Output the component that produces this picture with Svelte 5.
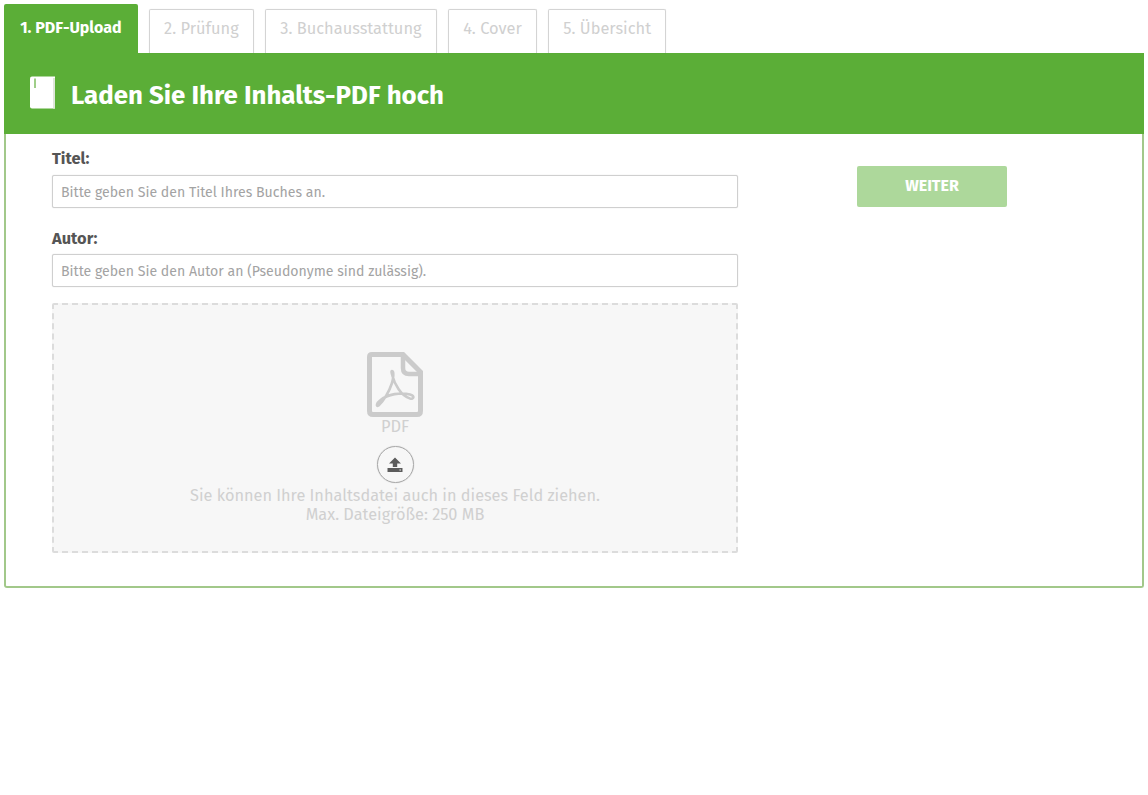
<script>
  const steps = ['2. Prüfung', '3. Buchausstattung', '4. Cover', '5. Übersicht'];
</script>

<div class="page">
  <nav class="tabs">
    <div class="tab active">1. PDF-Upload</div>
    {#each steps as s}
      <div class="tab">{s}</div>
    {/each}
  </nav>
  <section class="panel">
    <header class="head">
      <svg class="book" width="25" height="33" viewBox="0 0 25 33">
        <path d="M0 2.5 Q0 .4 2 .4 H25 V32.6 H2 Q0 32.6 0 30.5 Z" fill="#fff"/>
        <path d="M23 2 H25 V32.6 H23 Z" fill="#dfe6da"/>
        <path d="M4 2.5 H6 V12 H4 Z" fill="#9fce88"/>
      </svg>
      <h1>Laden Sie Ihre Inhalts-PDF hoch</h1>
    </header>
    <div class="body">
      <div class="form">
        <label class="lab first" for="t">Titel:</label>
        <input id="t" placeholder="Bitte geben Sie den Titel Ihres Buches an." />
        <label class="lab second" for="a">Autor:</label>
        <input id="a" placeholder="Bitte geben Sie den Autor an (Pseudonyme sind zulässig)." />
        <div class="drop">
          <svg class="pdf" width="56" height="65" viewBox="0 0 56 65" fill="none">
            <path d="M5 2.5 H36 L53.5 20 V59 Q53.5 62.5 50 62.5 H6 Q2.5 62.5 2.5 59 V5 Q2.5 2.5 5 2.5 Z" stroke="#cbcbcb" stroke-width="5"/>
            <path d="M36 3 V16 Q36 22 42 22 H53" stroke="#cbcbcb" stroke-width="4.5"/>
            <path d="M25 19 C27 19 26.5 26 25 31 C22 40 17 48 11.5 53.5 C9 55 9.5 51 13 48.5 C21 42 34 40 43 42.5 C48 44 47 47.5 43 46.5 C34 44 27.5 32 25.5 24 C25 22 24 19 25 19 Z" stroke="#cbcbcb" stroke-width="2.6" stroke-linejoin="round"/>
          </svg>
          <div class="pdflabel">PDF</div>
          <div class="circle">
            <svg width="18" height="16" viewBox="0 0 18 16">
              <path d="M9 0.5 L15 6.5 H11.2 V10 H6.8 V6.5 H3 Z" fill="#5c5c5c"/>
              <path d="M1.5 11 H16.5 V15 H1.5 Z" fill="#5c5c5c"/>
              <path d="M13.4 12.6 H15 V13.6 H13.4 Z" fill="#e8e8e8"/>
            </svg>
          </div>
          <div class="hint">Sie können Ihre Inhaltsdatei auch in dieses Feld ziehen.</div>
          <div class="hint">Max. Dateigröße: 250 MB</div>
        </div>
      </div>
      <div class="side">
        <button class="next">WEITER</button>
      </div>
    </div>
  </section>
</div>

<style>
  :global(body) { margin: 0; background: #fff; }
  .page {
    padding: 4px 3px 0 4px;
    font-family: "Fira Sans", "Noto Sans", "Open Sans", sans-serif;
    color: #555;
  }
  .tabs { display: flex; align-items: flex-end; gap: 11px; height: 49px; }
  .tab {
    box-sizing: border-box;
    height: 44px;
    padding: 0 14.3px;
    border: 1px solid #d4d4d4;
    border-bottom: 0;
    border-radius: 2px 2px 0 0;
    box-shadow: 0 0 1px rgba(0, 0, 0, 0.12);
    color: #d0d0d0;
    font-size: 16.4px;
    line-height: 38px;
    white-space: nowrap;
  }
  .tab.active {
    height: 49px;
    padding: 0 16.2px;
    border: 0;
    box-shadow: none;
    background: #5bae37;
    color: #fff;
    font-weight: 700;
    font-size: 16px;
    line-height: 48px;
  }
  .panel {
    box-sizing: border-box;
    width: 1140px;
    height: 535px;
    border: 2px solid #a2c88a;
    border-top: 0;
    border-radius: 0 0 3px 3px;
  }
  .head {
    display: flex;
    align-items: center;
    gap: 16px;
    height: 81px;
    margin: 0 -2px;
    padding-left: 26px;
    background: #5bae37;
    box-sizing: border-box;
  }
  .book { margin-top: -2px; }
  h1 {
    margin: 0;
    padding-top: 4px;
    color: #fff;
    font-size: 25.85px;
    font-weight: 700;
  }
  .body { display: flex; padding: 15px 0 0 46px; }
  .form { width: 686px; display: flex; flex-direction: column; }
  .lab {
    font-size: 16.4px;
    font-weight: 700;
    line-height: 20px;
    color: #555;
    margin-bottom: 5px;
  }
  .first { margin-bottom: 6px; }
  .second { margin-top: 21px; }
  input {
    box-sizing: border-box;
    width: 100%;
    height: 33px;
    padding: 2px 8px 0;
    border: 1px solid #cfcfcf;
    border-radius: 2px;
    box-shadow: 0 0 1px rgba(0, 0, 0, 0.2);
    background: #fff;
    font-family: inherit;
    font-size: 14.1px;
    outline: none;
  }
  input::placeholder { color: #a3a3a3; opacity: 1; }
  .drop {
    box-sizing: border-box;
    height: 250px;
    margin-top: 16px;
    border: 2px dashed #dcdcdc;
    border-radius: 2px;
    background: #f7f7f7;
    display: flex;
    flex-direction: column;
    align-items: center;
    padding-top: 46px;
    text-align: center;
  }
  .pdf { display: block; margin-top: 1px; }
  .pdflabel { color: #d0d0d0; font-size: 16.4px; line-height: 18px; margin-top: 1px; }
  .circle {
    box-sizing: border-box;
    width: 37px;
    height: 37px;
    margin-top: 10px;
    border: 1px solid #a8a8a8;
    box-shadow: 0 0 1px rgba(0, 0, 0, 0.3);
    border-radius: 50%;
    display: flex;
    align-items: center;
    justify-content: center;
  }
  .hint { color: #d0d0d0; font-size: 16.3px; line-height: 19px; }
  .circle + .hint { margin-top: 3px; }
  .side { padding: 17px 0 0 119px; }
  .next {
    width: 150px;
    height: 41px;
    border: 0;
    border-radius: 2px;
    background: #add89b;
    color: #fff;
    font-family: inherit;
    font-size: 16px;
    font-weight: 700;
    padding: 0 0 3px;
  }
</style>
